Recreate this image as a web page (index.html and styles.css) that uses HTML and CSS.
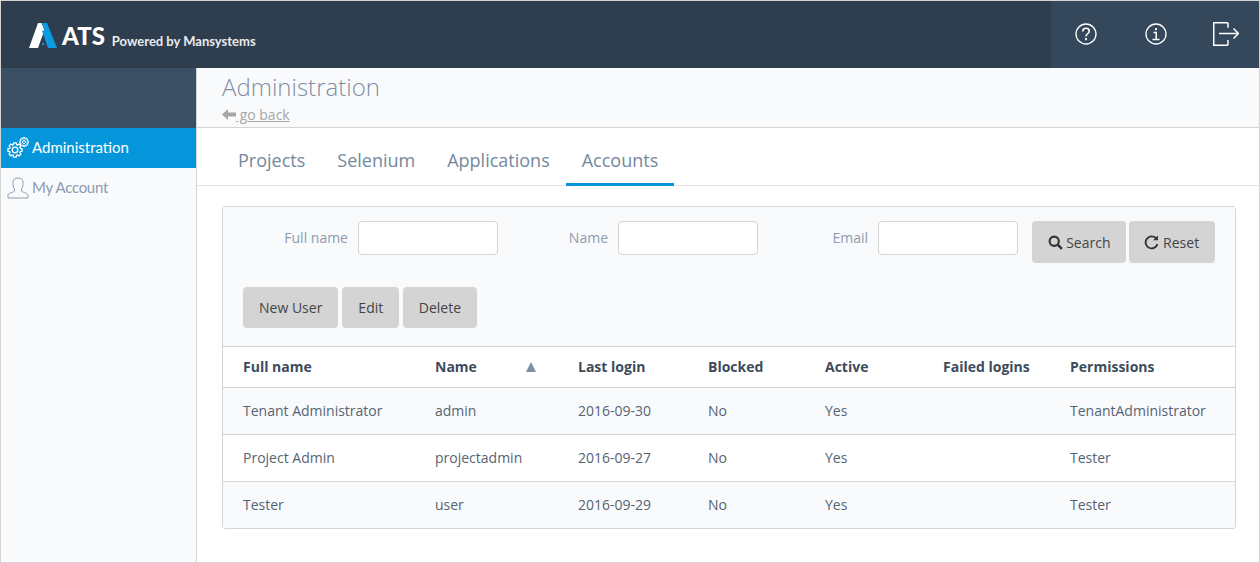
FILE: index.html
```html
<!DOCTYPE html>
<html lang="en">
<head>
    <meta charset="UTF-8">
    <meta name="viewport" content="width=device-width, initial-scale=1.0">
    <title>ATS - Administration</title>
    <link rel="stylesheet" href="styles.css">
</head>
<body>
    <div class="app">
        <header class="topbar">
            <div class="brand">
                <svg class="brand-mark" width="29" height="25" viewBox="0 0 29 25">
                    <path d="M9 0h3.500l3 7L9 25H0z" fill="#fff"/>
                    <path d="M12.500 0H18l10 25h-9L13 8l2.500-1z" fill="#0a9be0"/>
                    <rect x="13" y="20" width="2" height="2" fill="#0a9be0"/>
                </svg>
                <span class="brand-name">ATS</span>
                <span class="brand-sub">Powered by Mansystems</span>
            </div>
            <div class="top-actions">
                <svg class="top-icon" width="24" height="24" viewBox="0 0 24 24" fill="none" stroke="#fff">
                    <circle cx="12" cy="12" r="10" stroke-width="1.300"/>
                    <path d="M8.800 9.500c0-2 1.400-3.200 3.200-3.200s3.200 1.100 3.200 2.900c0 2.500-3.200 2.600-3.200 5.200" stroke-width="1.600"/>
                    <path d="M12 16v2.200" stroke-width="1.800"/>
                </svg>
                <svg class="top-icon" width="24" height="24" viewBox="0 0 24 24" fill="none" stroke="#fff">
                    <circle cx="12" cy="12" r="10" stroke-width="1.300"/>
                    <path d="M12 6v2.200" stroke-width="1.800"/>
                    <path d="M9.500 10.500H12.200V17M8.500 17.500h7" stroke-width="1.500"/>
                </svg>
                <svg class="top-icon icon-logout" width="26" height="24" viewBox="0 0 26 24" fill="none" stroke="#fff" stroke-width="1.500">
                    <path d="M15 .75H.75v22.500H15M15 .75v5M15 18v5"/>
                    <path d="M6 11.500h19M20.500 6.500l5 5-5 5"/>
                </svg>
            </div>
        </header>
        <div class="layout">
            <aside class="sidebar">
                <div class="sidebar-top"></div>
                <a class="side-item active">
                    <svg width="22" height="22" viewBox="0 0 22 22" fill="none" stroke="#fff">
                        <defs>
                            <polygon id="gear" points="4.76,-1.55 6.4,-1.13 6.4,1.13 4.76,1.55 4.46,2.27 5.32,3.73 3.73,5.32 2.27,4.46 1.55,4.76 1.13,6.4 -1.13,6.4 -1.55,4.76 -2.27,4.46 -3.73,5.32 -5.32,3.73 -4.46,2.27 -4.76,1.55 -6.4,1.13 -6.4,-1.13 -4.76,-1.55 -4.46,-2.27 -5.32,-3.73 -3.73,-5.32 -2.27,-4.46 -1.55,-4.76 -1.13,-6.4 1.13,-6.4 1.55,-4.76 2.27,-4.46 3.73,-5.32 5.32,-3.73 4.46,-2.27"/>
                        </defs>
                        <use href="#gear" transform="translate(8 13) scale(1.100)" stroke-width="1.200"/>
                        <circle cx="8" cy="13" r="2.800" stroke-width="1.300"/>
                        <use href="#gear" transform="translate(17 5) scale(.68)" stroke-width="1.600"/>
                        <circle cx="17" cy="5" r="1.500" stroke-width="1"/>
                    </svg>
                    <span>Administration</span>
                </a>
                <a class="side-item side-account">
                    <svg width="22" height="22" viewBox="0 0 22 22" fill="none" stroke="#8d9bb0" stroke-width="1">
                        <path d="M1 21v-2.500c0-2.500 5-3 6.500-4.500v-2C6 10.500 6 8 6 5.500 6 2.500 8 1 11 1s5 1.500 5 4.500c0 2.500 0 5-1.500 6.500v2c1.500 1.500 6.500 2 6.500 4.500V21z"/>
                    </svg>
                    <span>My Account</span>
                </a>
            </aside>
            <main class="content">
                <div class="page-head">
                    <h1>Administration</h1>
                    <a class="back-link"><svg width="14" height="11" viewBox="0 0 14 11"><path d="M0 5.500l6-5.500v3.500h8v4H6V11z" fill="#a6a6a6"/></svg> go back</a>
                </div>
                <nav class="tabs">
                    <a class="tab">Projects</a>
                    <a class="tab">Selenium</a>
                    <a class="tab">Applications</a>
                    <a class="tab current">Accounts</a>
                </nav>
                <section class="panel">
                    <div class="filters">
                        <form class="search-row">
                            <label class="field field-first"><span class="field-label">Full name</span> <input type="text"></label>
                            <label class="field"><span class="field-label">Name</span> <input type="text"></label>
                            <label class="field"><span class="field-label">Email</span> <input type="text"></label>
                            <button type="button" class="btn btn-search">
                                <svg width="15" height="15" viewBox="0 0 14 14" fill="none" stroke="#333"><circle cx="5.800" cy="5.800" r="4.300" stroke-width="2"/><path d="M9 9l4 4" stroke-width="2.400"/></svg>
                                Search
                            </button>
                            <button type="button" class="btn btn-reset">
                                <svg width="15" height="15" viewBox="0 0 14 14" fill="none" stroke="#333" stroke-width="1.800"><path d="M12.500 8.500A5.600 5.600 0 1 1 11 2.800"/><path d="M13 .5V5H8.500z" fill="#333" stroke="none"/></svg>
                                Reset
                            </button>
                        </form>
                        <div class="action-row">
                            <button type="button" class="btn">New User</button>
                            <button type="button" class="btn">Edit</button>
                            <button type="button" class="btn btn-delete">Delete</button>
                        </div>
                    </div>
                    <table class="users">
                        <thead>
                            <tr>
                                <th class="col-full">Full name</th>
                                <th class="col-name">Name <span class="sort"></span></th>
                                <th class="col-login">Last login</th>
                                <th class="col-blocked">Blocked</th>
                                <th class="col-active">Active</th>
                                <th class="col-failed">Failed logins</th>
                                <th>Permissions</th>
                            </tr>
                        </thead>
                        <tbody>
                            <tr><td>Tenant Administrator</td><td>admin</td><td>2016-09-30</td><td>No</td><td>Yes</td><td></td><td>TenantAdministrator</td></tr>
                            <tr><td>Project Admin</td><td>projectadmin</td><td>2016-09-27</td><td>No</td><td>Yes</td><td></td><td>Tester</td></tr>
                            <tr><td>Tester</td><td>user</td><td>2016-09-29</td><td>No</td><td>Yes</td><td></td><td>Tester</td></tr>
                        </tbody>
                    </table>
                </section>
            </main>
        </div>
    </div>
</body>
</html>
```
FILE: styles.css
```css
* {
    box-sizing: border-box;
}
html, body {
    height: 100%;
}
body {
    margin: 0;
    font-family: "Open Sans", sans-serif;
    font-size: 14px;
    color: #3d4c5c;
    background-color: #fff;
    overflow: hidden;
}
.app {
    height: 563px;
    border: 1px solid #d4d4d4;
    display: flex;
    flex-direction: column;
}
.topbar {
    height: 67px;
    flex: none;
    display: flex;
    justify-content: space-between;
    background-color: #2f3e4e;
}
.brand {
    display: flex;
    align-items: center;
    padding: 4px 0 0 28px;
    color: #fff;
}
.brand-mark {
    margin-top: -3px;
}
.brand-name {
    font-family: Lato, sans-serif;
    font-weight: 900;
    font-size: 24px;
    margin-left: 4px;
    margin-top: -2px;
}
.brand-sub {
    font-family: Lato, sans-serif;
    font-weight: 700;
    font-size: 13px;
    margin-left: 7px;
    margin-top: 9px;
    color: #e8ebee;
}
.top-actions {
    width: 208px;
    background-color: #34475b;
    display: flex;
    align-items: center;
    padding-left: 23px;
}
.top-icon {
    flex: none;
    margin-right: 46px;
    margin-bottom: 2px;
}
.icon-logout {
    margin-left: -1px;
    margin-right: 0;
}
.layout {
    flex: 1;
    display: flex;
    min-height: 0;
}
.sidebar {
    width: 196px;
    flex: none;
    background-color: #f9fafc;
    border-right: 1px solid #d4d4d4;
}
.sidebar-top {
    height: 60px;
    background-color: #3a4f63;
}
.side-item {
    height: 40px;
    display: flex;
    align-items: center;
    gap: 3px;
    padding-left: 6px;
    font-family: Lato, sans-serif;
    font-size: 15px;
    line-height: 18px;
    color: #8d9bb0;
}
.side-item span {
    margin-bottom: 3px;
}
.side-item.active {
    background-color: #0595da;
    color: #fff;
}
.side-account span {
    letter-spacing: -0.3px;
}
.content {
    flex: 1;
    min-width: 0;
}
.page-head {
    height: 60px;
    padding: 2px 25px 0;
    background-color: #f9fafc;
    border-bottom: 1px solid #d4d4d4;
}
.page-head h1 {
    margin: 0;
    font-size: 24px;
    font-weight: 300;
    line-height: 34px;
    color: #7f8ea5;
}
.back-link {
    font-size: 14px;
    line-height: 20px;
    display: block;
    padding-top: 1px;
    color: #a6a6a6;
    text-decoration: underline;
}
.tabs {
    height: 58px;
    display: flex;
    padding-left: 25px;
    border-bottom: 1px solid #e4e4e4;
}
.tab {
    font-size: 18px;
    line-height: 24px;
    height: 58px;
    padding: 20px 16px 0;
    color: #74889e;
}
.tab.current {
    border-bottom: 3px solid #0595da;
}
.panel {
    margin: 20px 23px 0 25px;
    border: 1px solid #d4d4d4;
    border-radius: 3px;
}
.filters {
    height: 139px;
    background-color: #f9fafc;
    padding: 14px 20px 0;
}
.search-row {
    display: flex;
    height: 66px;
    align-items: flex-start;
}
.field {
    width: 260px;
    display: flex;
    justify-content: flex-end;
    align-items: center;
    gap: 10px;
    color: #8d9bb0;
    height: 34px;
}
.field-first {
    width: 255px;
}
.field-label {
    margin-bottom: 2px;
}
.field input {
    width: 140px;
    height: 34px;
    border: 1px solid #d4d4d4;
    border-radius: 4px;
    background-color: #fff;
}
.btn {
    height: 42px;
    padding: 0 16px;
    border: none;
    border-radius: 4px;
    background-color: #d4d4d4;
    font-family: inherit;
    font-size: 14px;
    color: #444;
}
.btn svg {
    vertical-align: -2px;
}
.btn-search, .btn-reset {
    padding: 0 15.500px;
}
.btn-search {
    margin-left: 14px;
    margin-right: 3px;
}
.action-row {
    display: flex;
    gap: 4px;
}
.action-row .btn {
    height: 41px;
}
.action-row .btn-delete {
    padding: 0 15.500px;
}
.users {
    width: 100%;
    border-collapse: separate;
    border-spacing: 0;
    table-layout: fixed;
}
.users th, .users td {
    text-align: left;
    padding: 0 0 0 20px;
    border-top: 1px solid #d4d4d4;
    color: #556473;
    font-weight: 400;
    white-space: nowrap;
}
.users th {
    height: 41px;
    font-weight: 700;
    color: #3d4c5c;
    background-color: #fff;
    padding-bottom: 1px;
}
.users td {
    height: 47px;
    padding-bottom: 2px;
}
.users tbody tr:nth-child(odd) td {
    background-color: #f9fafc;
}
.col-full { width: 192px; }
.col-name { width: 143px; }
.col-login { width: 130px; }
.col-blocked { width: 117px; }
.col-active { width: 118px; }
.col-failed { width: 127px; }
.sort {
    float: right;
    margin: 5px 22px 0 0;
    border-left: 5.500px solid transparent;
    border-right: 5.500px solid transparent;
    border-bottom: 10px solid #7f8fa3;
}
```
